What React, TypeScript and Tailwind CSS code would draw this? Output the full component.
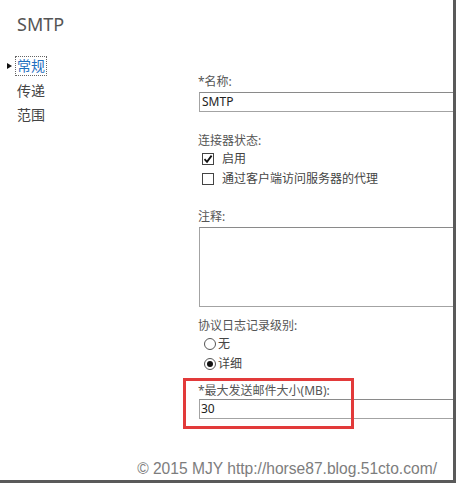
import React from "react";

const font = "font-['Noto_Sans','Noto_Sans_CJK_SC',sans-serif]";

function Checkbox({ checked, label }: { checked: boolean; label: string }) {
  return (
    <div className="h-[20px] flex items-center">
      <span className="ml-[3px] w-[12px] h-[12px] border border-[#444] bg-white flex items-center justify-center">
        {checked && (
          <svg width="10" height="10" viewBox="0 0 10 10">
            <path d="M1.5 5.2 L4 7.8 L8.6 1.6" fill="none" stroke="#111" strokeWidth="1.8" />
          </svg>
        )}
      </span>
      <span className="ml-[8px] text-[12px] text-[#444]">{label}</span>
    </div>
  );
}

function Radio({ checked, label }: { checked: boolean; label: string }) {
  return (
    <div className="h-[20px] flex items-center">
      <span className="ml-[5px] w-[12px] h-[12px] rounded-full border border-[#555] bg-white flex items-center justify-center">
        {checked && <span className="w-[6px] h-[6px] rounded-full bg-[#111]" />}
      </span>
      <span className="ml-[2px] text-[12px] text-[#444]">{label}</span>
    </div>
  );
}

function Label({ children, className = "" }: { children: React.ReactNode; className?: string }) {
  return <div className={`text-[12px] leading-[16px] text-[#555] -ml-[1px] ${className}`}>{children}</div>;
}

export default function App() {
  return (
    <div className={`w-[456px] h-[483px] bg-white border-r-[3px] border-b-[3px] border-[#5a5a5a] flex flex-col relative ${font}`}>
      {/* Header */}
      <div className="pl-[17px] pt-[12px] text-[18px] leading-[24px] text-[#555]">SMTP</div>

      <div className="flex mt-[18px]">
        {/* Nav */}
        <div className="w-[199px] pl-[7px] flex flex-col text-[14px] text-[#444]">
          <div className="h-[24px] flex items-center">
            <span className="w-0 h-0 border-y-[3px] border-y-transparent border-l-[5px] border-l-[#111] mr-[4px]" />
            <span className="text-[#1f6fbf] outline-1 outline-dotted outline-[#666] leading-[18px] px-[1px]">常规</span>
          </div>
          <div className="h-[24px] flex items-center pl-[10px]">传递</div>
          <div className="h-[24px] flex items-center pl-[10px]">范围</div>
        </div>

        {/* Form */}
        <div className="flex-1 flex flex-col">
          <Label className="mt-[20px]">*名称:</Label>
          <div className="mt-[2px] h-[20px] border-y border-l border-[#a3a3a3] border-t-[#8a8a8a] flex items-center pl-[2px] text-[12px] text-[#222]">
            SMTP
          </div>

          <Label className="mt-[21px]">连接器状态:</Label>
          <Checkbox checked label="启用" />
          <Checkbox checked={false} label="通过客户端访问服务器的代理" />

          <Label className="mt-[20px]">注释:</Label>
          <div className="mt-[2px] h-[80px] border-y border-l border-[#a3a3a3] border-t-[#8a8a8a]" />

          <Label className="mt-[11px]">协议日志记录级别:</Label>
          <Radio checked={false} label="无" />
          <Radio checked label="详细" />

          <Label className="mt-[9px]">*最大发送邮件大小(MB):</Label>
          <div className="h-[20px] border-y border-l border-[#a3a3a3] border-t-[#8a8a8a] flex items-center pl-[1px] text-[12px] text-[#222]">
            30
          </div>
        </div>
      </div>

      {/* annotation box */}
      <div className="absolute left-[183px] top-[378px] w-[171px] h-[51px] border-[3px] border-[#e23a3a]" />

      {/* Footer */}
      <div className="mt-auto pr-[16px] pb-[2px] text-right font-['Liberation_Sans',Arial,sans-serif] text-[15.6px] leading-[19px] text-[#7d7d7d]">
        © 2015 MJY http://horse87.blog.51cto.com/
      </div>
    </div>
  );
}
